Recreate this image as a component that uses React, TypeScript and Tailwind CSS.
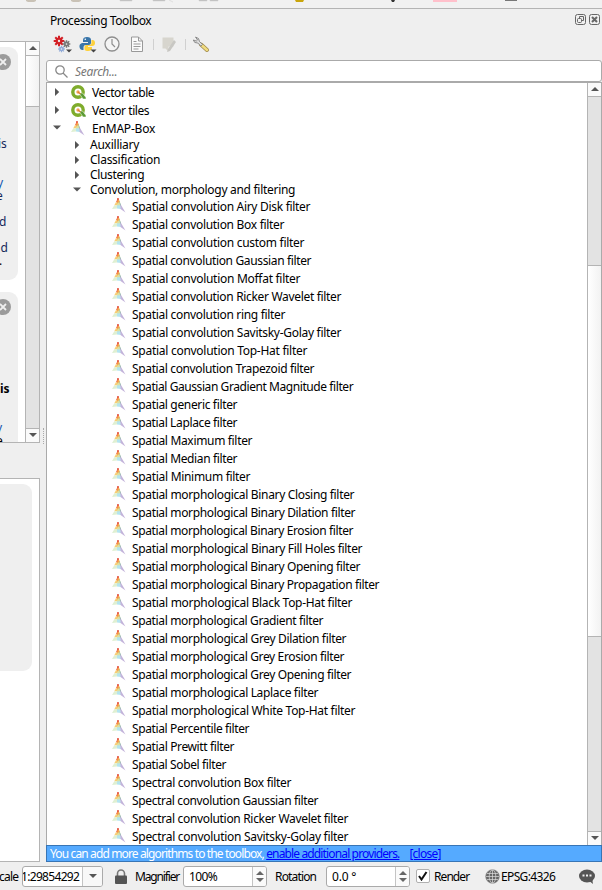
import React from "react";

const filters: [string, number][] = [
  ["Spatial convolution Airy Disk filter", 178],
  ["Spatial convolution Box filter", 152],
  ["Spatial convolution custom filter", 172],
  ["Spatial convolution Gaussian filter", 179],
  ["Spatial convolution Moffat filter", 168],
  ["Spatial convolution Ricker Wavelet filter", 209],
  ["Spatial convolution ring filter", 153],
  ["Spatial convolution Savitsky-Golay filter", 209],
  ["Spatial convolution Top-Hat filter", 175],
  ["Spatial convolution Trapezoid filter", 182],
  ["Spatial Gaussian Gradient Magnitude filter", 221],
  ["Spatial generic filter", 105],
  ["Spatial Laplace filter", 105],
  ["Spatial Maximum filter", 120],
  ["Spatial Median filter", 105],
  ["Spatial Minimum filter", 118],
  ["Spatial morphological Binary Closing filter", 222],
  ["Spatial morphological Binary Dilation filter", 223],
  ["Spatial morphological Binary Erosion filter", 221],
  ["Spatial morphological Binary Fill Holes filter", 230],
  ["Spatial morphological Binary Opening filter", 228],
  ["Spatial morphological Binary Propagation filter", 247],
  ["Spatial morphological Black Top-Hat filter", 220],
  ["Spatial morphological Gradient filter", 191],
  ["Spatial morphological Grey Dilation filter", 214],
  ["Spatial morphological Grey Erosion filter", 212],
  ["Spatial morphological Grey Opening filter", 219],
  ["Spatial morphological Laplace filter", 186],
  ["Spatial morphological White Top-Hat filter", 223],
  ["Spatial Percentile filter", 117],
  ["Spatial Prewitt filter", 102],
  ["Spatial Sobel filter", 94],
  ["Spectral convolution Box filter", 159],
  ["Spectral convolution Gaussian filter", 186],
  ["Spectral convolution Ricker Wavelet filter", 216],
  ["Spectral convolution Savitsky-Golay filter", 216],
];

/* Text whose letter spacing is adjusted so that it fills the given width. */
function Fit({ text, w, className = "" }: { text: string; w: number; className?: string }) {
  const ref = React.useRef<HTMLSpanElement>(null);
  const [ls, setLs] = React.useState(0);
  React.useLayoutEffect(() => {
    if (ref.current) {
      const natural = ref.current.getBoundingClientRect().width;
      setLs((w + 0.2 - natural) / text.length);
    }
  }, []);
  return (
    <span ref={ref} className={"inline-block shrink-0 whitespace-pre " + className} style={{ letterSpacing: ls }}>
      {text}
    </span>
  );
}

function Prism() {
  return (
    <svg width="14" height="16" viewBox="0 0 14 16" className="shrink-0">
      <path d="M6 1 4 5 6 6z" fill="#ee6a4a" />
      <path d="M4 5 2.200 8.500 5 8 6 6z" fill="#f8cd74" />
      <path d="M2.200 8.500 0 12 5 11.500 5 8z" fill="#dff0d2" />
      <path d="M6 1 8 5 6 8 5 7z" fill="#f5a848" />
      <path d="M5.500 6 8 5 8.500 9 5 9z" fill="#dbe0a0" />
      <path d="M5 8.500 8.500 8 9 12 5 11.500z" fill="#b4e4f0" />
      <path d="M7 3 9 8 8.500 10z" fill="#86b0a8" />
      <path d="M8.400 7 13.500 15.500 8.500 12z" fill="#c3b3da" />
      <path d="M5.300 1h1.400v2H5.300z" fill="#e2483d" />
    </svg>
  );
}

function QIcon() {
  return (
    <svg width="15" height="15" viewBox="0 0 15 15" className="shrink-0">
      <circle cx="7" cy="7" r="5.200" fill="none" stroke="#7fac2c" strokeWidth="3.400" />
      <path d="M8 8h3.500l3.500 4.500V14h-3z" fill="#5b9a34" stroke="#fff" strokeWidth=".5" />
      <circle cx="7" cy="7" r="1.700" fill="#f1a257" />
      <path d="m7 7 2.500 2" stroke="#e07d2e" strokeWidth="1.300" />
    </svg>
  );
}

function Chevron({ open }: { open?: boolean }) {
  return (
    <svg width="8" height="8" viewBox="0 0 8 8" className="shrink-0">
      {open ? <path d="M0 1.500h8L4 5.500z" fill="#555" /> : <path d="M2 0v8l4.200-4z" fill="#555" />}
    </svg>
  );
}

function ScrollButton({ down }: { down?: boolean }) {
  return (
    <div className={"flex h-[14px] shrink-0 justify-center border-[#b4b4b4] bg-[#fafafa] pt-1 " + (down ? "border-t" : "border-b")}>
      <svg width="8" height="4" viewBox="0 0 8 4">
        <path d={down ? "M0 0h8L4 4z" : "M0 4h8L4 0z"} fill="#555" />
      </svg>
    </div>
  );
}

function Spin({ text, w, className }: { text: string; w: number; className: string }) {
  return (
    <div className={"flex h-[21px] shrink-0 items-stretch justify-between rounded-[3px] border border-[#aaa] bg-white pl-[5px] " + className}>
      <span className="self-center leading-[15px]"><Fit text={text} w={w} /></span>
      <div className="flex w-[14px] flex-col items-center justify-center gap-[3px] rounded-r-[2px] border-l border-[#c4c4c4] bg-[#fafafa]">
        <svg width="8" height="4"><path d="M0 4h8L4 0z" fill="#666" /></svg>
        <svg width="8" height="4"><path d="M0 0h8L4 4z" fill="#666" /></svg>
      </div>
    </div>
  );
}

function CloseDot() {
  return (
    <svg width="16" height="16" viewBox="0 0 16 16" className="absolute top-[7px] right-[7px]">
      <circle cx="8" cy="8" r="8" fill="#9b9b9b" />
      <path d="m5 5 6 6m0-6-6 6" stroke="#efefef" strokeWidth="1.800" />
    </svg>
  );
}

function Gear({ cx, cy, r, fill }: { cx: number; cy: number; r: number; fill: string }) {
  return (
    <g>
      <path
        d={[0, 45, 90, 135]
          .map((a) => {
            const x = Math.cos((a * Math.PI) / 180) * r;
            const y = Math.sin((a * Math.PI) / 180) * r;
            return `M${cx - x} ${cy - y}L${cx + x} ${cy + y}`;
          })
          .join("")}
        stroke={fill}
        strokeWidth={r * 0.38}
      />
      <circle cx={cx} cy={cy} r={r * 0.65} fill={fill} />
      <circle cx={cx} cy={cy} r={r * 0.22} fill="#efefef" />
    </g>
  );
}

function Toolbar() {
  return (
    <svg width="170" height="20" viewBox="50 34 170 20">
      <Gear cx={59} cy={41} r={5.300} fill="#d31f25" />
      <Gear cx={66.500} cy={44} r={3.800} fill="#777" />
      <Gear cx={61.500} cy={49} r={3.300} fill="#91abd7" />
      <path d="M66 49.500h6l-3 3z" fill="#444" />
      <path d="M87 37q-4 0-4 3v2h5v1h-6q-3 1-2.500 4 .5 3 3 3h1v-3q0-2 2.500-2h3q2 0 2-2v-3q0-3-4-3z" fill="#3875a9" />
      <path d="M88 51q4 0 4-3v-1h-4v-1h4q3 0 3-3 0-3-2.500-3h-1v3q0 2-2 2h-3q-2 0-2 2v2q0 2 4 2z" fill="#fdd03b" />
      <circle cx="85.300" cy="39.300" r=".8" fill="#fff" />
      <path d="M90.500 49.500h6l-3 3z" fill="#444" />
      <circle cx="112" cy="44" r="7" fill="#f4f4f4" stroke="#8e8e8e" strokeWidth="1.300" />
      <path d="M112 39v5l3 3" fill="none" stroke="#8e8e8e" strokeWidth="1.200" />
      <path d="M131.500 37h7l4 4v10.500h-11z" fill="#fafafa" stroke="#999" />
      <path d="M138.500 37v4h4M133.500 41.500h3M133.500 44h7M133.500 46.500h7M133.500 49h5" fill="none" stroke="#999" />
      <path d="M153.500 39v11M185.500 39v11" stroke="#d0d0d0" />
      <path d="M162.500 37.500h11v9h-5v5l-3-3h-3z" fill="#d7d5ce" />
      <path d="m168 49 6-9 2 2-6 9-3 1z" fill="#c8c7c3" />
      <path d="m201 44.500 6 5.500" stroke="#a08a4c" strokeWidth="4" strokeLinecap="round" />
      <path d="m201 44.500 6 5.500" stroke="#f0dc80" strokeWidth="2.400" strokeLinecap="round" />
      <path d="m195.500 37 3 1.500 1 3 3 3-1.700 1.600-3-3.100-3-.5-1.500-2.500 3 1 1.200-1z" fill="#ddd" stroke="#777" strokeWidth=".8" />
    </svg>
  );
}

function LeftColumn() {
  return (
    <div className="flex w-10 shrink-0 flex-col pt-8">
      <div className="flex h-[402px] shrink-0 overflow-hidden border-y border-r border-[#b4b4b4] bg-white">
        <div className="flex h-[400px] w-[25px] shrink-0 flex-col gap-3 overflow-hidden pt-[5px] pr-[7px]">
          <div className="relative h-[233px] shrink-0 rounded-r-[9px] bg-[#efefef] pt-[90px] leading-[13px] text-[#14285a]">
            <CloseDot />
            <p className="-ml-[2px]">is</p>
            <p className="h-[26px]"></p>
            <p className="-ml-[3px] text-[#1555b0]">y</p>
            <p className="-ml-[4px]">e</p>
            <p className="h-[13px]"></p>
            <p className="-ml-px">d</p>
            <p className="h-[13px]"></p>
            <p className="-ml-[7px] whitespace-nowrap">nd</p>
            <p className="-ml-px text-black">.</p>
          </div>
          <div className="relative h-[160px] shrink-0 rounded-tr-[9px] bg-[#efefef] pt-[90px] leading-[13px]">
            <CloseDot />
            <p className="font-bold">is</p>
            <p className="h-[26px]"></p>
            <p className="-ml-[4px] text-[#1555b0]">y</p>
            <p className="-ml-[4px]">e</p>
          </div>
        </div>
        <div className="flex w-[14px] flex-col border-l border-[#b4b4b4] bg-[#e3e3e3]">
          <ScrollButton />
          <div className="h-[51px] border-b border-[#b4b4b4] bg-linear-to-r from-white to-[#f2f2f2]" />
          <div className="flex-1" />
          <ScrollButton down />
        </div>
      </div>
      <div className="mt-[35px] h-[384px] border-y border-r border-[#b4b4b4] bg-white pt-[5px]">
        <div className="h-[187px] w-8 rounded-r-[9px] bg-[#efefef]" />
      </div>
    </div>
  );
}

function Provider({ text, w, open, children }: { text: string; w: number; open?: boolean; children: React.ReactNode }) {
  return (
    <div className="flex h-[18px] items-center pl-[6px]">
      <Chevron open={open} />
      <div className="mr-[5px] ml-[10px] flex w-4 shrink-0">{children}</div>
      <Fit text={text} w={w} />
    </div>
  );
}

function Group({ text, w, open }: { text: string; w: number; open?: boolean }) {
  return (
    <div className="flex h-[15px] items-center gap-[9px] pl-[26px]">
      <Chevron open={open} />
      <Fit text={text} w={w} />
    </div>
  );
}

function Tree() {
  return (
    <div className="flex h-[763px] shrink-0 border border-b-0 border-[#aaa] bg-white">
      <div className="h-[762px] flex-1 overflow-hidden">
        <Provider text="Vector table" w={62}><QIcon /></Provider>
        <Provider text="Vector tiles" w={57}><QIcon /></Provider>
        <Provider text="EnMAP-Box" w={63} open><Prism /></Provider>
        <Group text="Auxilliary" w={49} />
        <Group text="Classification" w={70} />
        <Group text="Clustering" w={54} />
        <Group text="Convolution, morphology and filtering" w={205} open />
        {filters.map(([text, w]) => (
          <div key={text} className="flex h-[18px] items-center gap-[6px] pl-[65px]">
            <div className="flex pb-0.5"><Prism /></div>
            <Fit text={text} w={w} />
          </div>
        ))}
      </div>
      <div className="flex w-[14px] shrink-0 flex-col border-l border-[#b4b4b4] bg-[#e3e3e3]">
        <ScrollButton />
        <div className="h-[168px]" />
        <div className="h-[372px] border-y border-[#b4b4b4] bg-linear-to-r from-white to-[#f2f2f2]" />
        <div className="flex-1" />
        <ScrollButton down />
      </div>
    </div>
  );
}

function StatusBar() {
  return (
    <div className="flex h-7 shrink-0 items-center">
      <div className="w-[22px] shrink-0"><Fit text="cale" w={19} className="-ml-px" /></div>
      <div className="flex h-[21px] w-[81px] shrink-0 items-stretch justify-between overflow-hidden rounded-[3px] border border-[#aaa] bg-white">
        <span className="self-center"><Fit text="1:29854292" w={58} className="-ml-[2px]" /></span>
        <div className="flex w-5 items-center justify-center border-l border-[#c4c4c4] bg-[#f8f8f8]">
          <svg width="8" height="4"><path d="M0 0h8L4 4z" fill="#555" /></svg>
        </div>
      </div>
      <svg width="12" height="15" viewBox="0 0 12 15" className="ml-3 shrink-0">
        <path d="M2.500 7V4.500a3.500 3.500 0 0 1 7 0V7" fill="none" stroke="#777" strokeWidth="1.600" />
        <rect y="6.500" width="12" height="8.500" rx="1" fill="#555" />
      </svg>
      <div className="ml-2 w-12 shrink-0"><Fit text="Magnifier" w={44} /></div>
      <Spin text="100%" w={28} className="w-[84px]" />
      <div className="ml-2 w-[51px] shrink-0"><Fit text="Rotation" w={41} /></div>
      <Spin text="0.0 °" w={24} className="w-[84px]" />
      <div className="ml-[6px] flex h-[14px] w-[14px] shrink-0 items-center justify-center rounded-[2px] border border-[#b0b0b0] bg-white">
        <svg width="10" height="10" viewBox="0 0 10 10" fill="none" stroke="#111" strokeWidth="2"><path d="m1 5 2.500 3.500L8.500 1" /></svg>
      </div>
      <div className="ml-[4px] w-[51px] shrink-0"><Fit text="Render" w={35} /></div>
      <svg width="15" height="15" viewBox="0 0 15 15" className="shrink-0" fill="none" stroke="#dcdcdc" strokeWidth=".7">
        <circle cx="7.500" cy="7.500" r="6.800" fill="#666" stroke="#888" />
        <path d="M1 7.500h13M7.500 1v13M2 4.500h11M2 10.500h11" />
        <ellipse cx="7.500" cy="7.500" rx="3.300" ry="6.500" />
      </svg>
      <div className="ml-px w-[78px] shrink-0"><Fit text="EPSG:4326" w={54} /></div>
      <svg width="16" height="15" viewBox="0 0 16 15" className="shrink-0">
        <ellipse cx="8" cy="7" rx="8" ry="6.500" fill="#555" />
        <path d="m9 11 5 4-1-6z" fill="#555" />
        <path d="M3.500 5.500h2v2h-2zM7 5.500h2v2H7zM10.500 5.500h2v2h-2z" fill="#efefef" />
      </svg>
    </div>
  );
}

export default function App() {
  return (
    <div className="flex h-[890px] w-[602px] flex-col overflow-hidden bg-[#efefef] font-['Noto_Sans','Open_Sans',sans-serif] text-[12px] leading-[15px] text-black">
      <div className="h-[9px] shrink-0 border-b border-[#b4b4b4] bg-[#f1f1f1]">
        <svg width="602" height="8" className="block">
          <path d="M26 0h10v1l-2 1h-6l-2-1zM71 0h10v1l-2 1h-6l-2-1z" fill="#c9c2b6" />
          <path d="M120 0h12v1h-12zM153 0h12v1h-12zM169 0l4 2M199 0h8v1h-8zM210 0h8v1h-8z" fill="#bbb" stroke="#ccc" strokeWidth=".5" />
          <path d="M295 0h9l-1 2h-7z" fill="#c9a50c" />
          <path d="M391 0h4l-1 2h-2z" fill="#333" />
          <path d="M433 0h24v2h-24z" fill="#ffc0cb" />
          <path d="M505 0h12v1h-12z" fill="#777" />
        </svg>
      </div>
      <div className="flex h-[853px] shrink-0">
        <LeftColumn />
        <div className="flex w-[6px] shrink-0 pt-[419px] pl-[3px]">
          <div className="h-4 border-l border-dotted border-[#aaa]" />
        </div>
        <div className="flex w-[556px] shrink-0 flex-col">
          <div className="flex h-[22px] shrink-0 items-center justify-between pr-[2px] pl-1">
            <Fit text="Processing Toolbox" w={101} />
            <svg width="25" height="11" viewBox="0 0 25 11" fill="none" stroke="#666" className="mb-0.5">
              <rect x=".5" y=".5" width="10" height="10" rx="2" />
              <rect x="2.500" y="4.500" width="4" height="4" rx="1" />
              <path d="M4.500 4V2.500h4v4H7" />
              <rect x="14.500" y=".5" width="10" height="10" rx="2" />
              <path d="m17 3 5 5m0-5-5 5" strokeWidth="2" />
            </svg>
          </div>
          <div className="flex h-[29px] shrink-0 items-center pb-[3px] pl-1"><Toolbar /></div>
          <div className="flex h-[22px] shrink-0 items-center gap-[7px] rounded-[3px] border border-[#aaa] bg-white pl-2 text-[#777]">
            <svg width="13" height="13" viewBox="0 0 13 13" fill="none" stroke="#888" strokeWidth="1.300">
              <circle cx="5" cy="5" r="4.200" /><path d="m8 8 4.500 4.500" />
            </svg>
            <Fit text="Search..." w={42} className="italic" />
          </div>
          <Tree />
          <div className="flex h-[17px] shrink-0 items-center border border-[#3875b5] bg-[#55aaff] pl-[3px] text-white">
            <Fit text="You can add more algorithms to the toolbox, " w={216} />
            <Fit text="enable additional providers." w={133} className="text-[#0000ff] underline" />
            <Fit text="[close]" w={31} className="ml-[10px] text-[#0000ff] underline" />
          </div>
        </div>
      </div>
      <StatusBar />
    </div>
  );
}
